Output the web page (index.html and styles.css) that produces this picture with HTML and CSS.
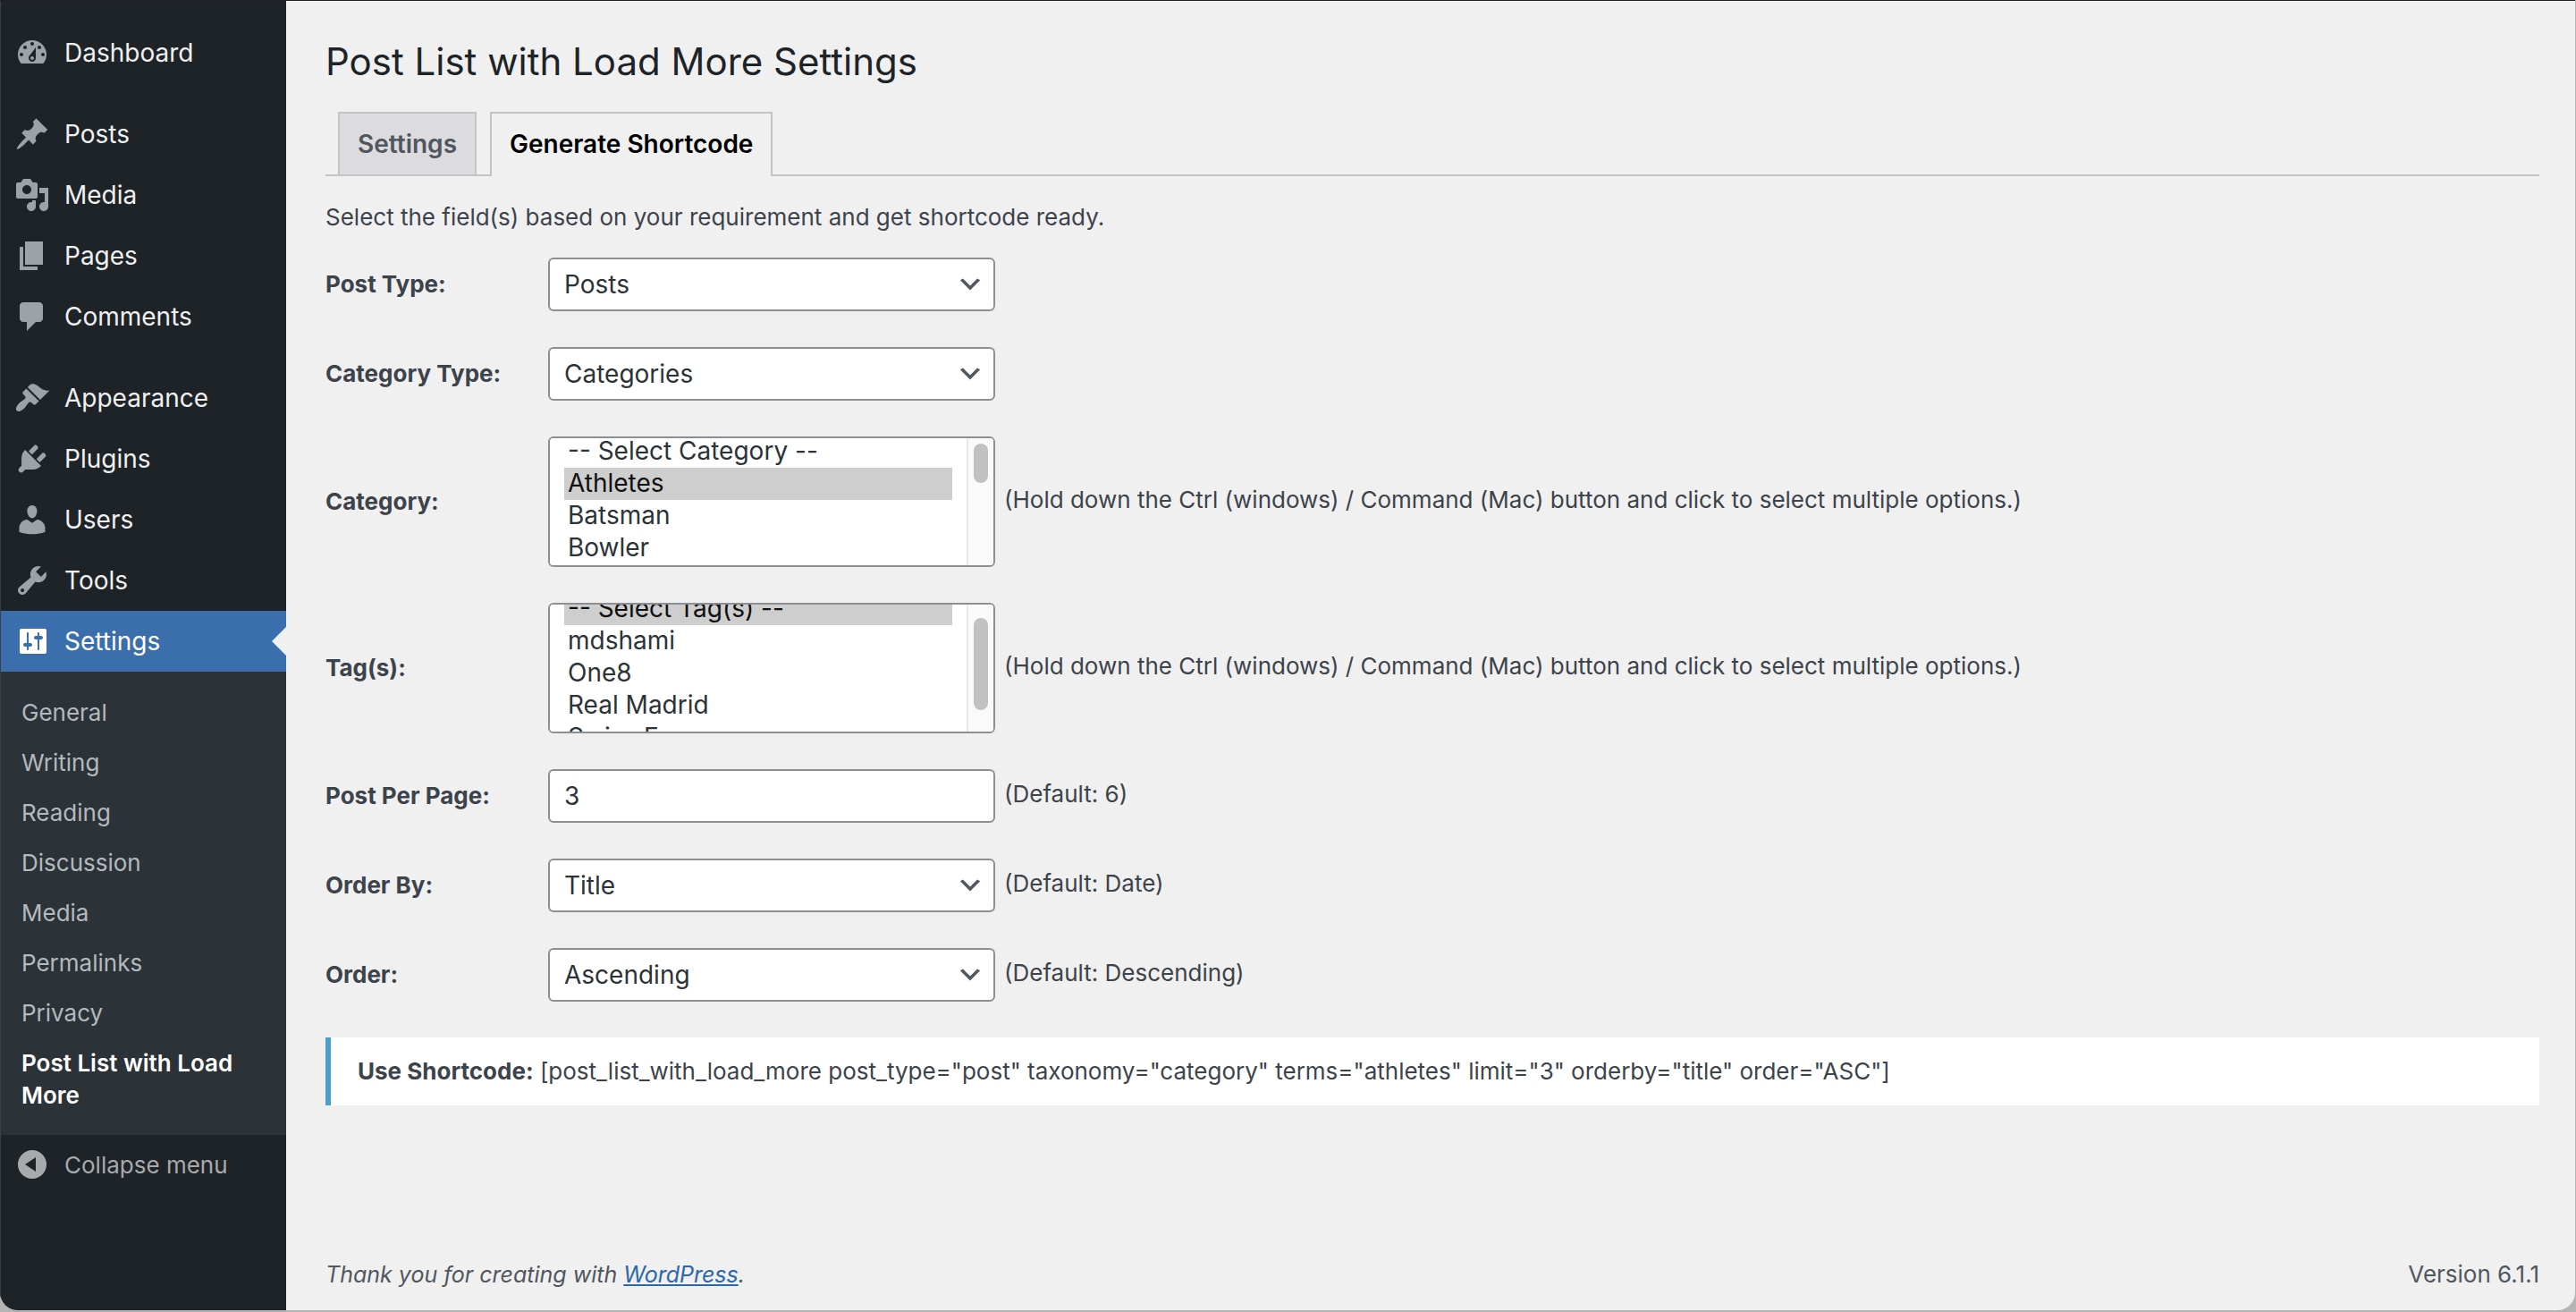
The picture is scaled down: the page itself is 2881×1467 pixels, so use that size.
FILE: index.html
```html
<!DOCTYPE html>
<html lang="en">
<head>
<meta charset="utf-8">
<title>Post List with Load More Settings</title>
<link rel="stylesheet" href="styles.css">
</head>
<body>
<div class="window">
  <nav class="sidebar" aria-label="Main menu">
    <ul class="menu">
      <li><a class="menu-item" href="#dashboard">
        <svg class="icon" viewBox="0 0 20 20"><path fill-rule="evenodd" d="M3.76 16h12.48c1.1-1.37 1.76-3.11 1.76-5 0-4.42-3.58-8-8-8s-8 3.58-8 8c0 1.89.66 3.63 1.76 5zM10 4c.55 0 1 .45 1 1s-.45 1-1 1-1-.45-1-1 .45-1 1-1zM6 6c.55 0 1 .45 1 1s-.45 1-1 1-1-.45-1-1 .45-1 1-1zm8 0c.55 0 1 .45 1 1s-.45 1-1 1-1-.45-1-1 .45-1 1-1zm-5.37 5.55L12 7v6c0 1.1-.9 2-2 2s-2-.9-2-2c0-.57.24-1.08.63-1.45zM4 10c.55 0 1 .45 1 1s-.45 1-1 1-1-.45-1-1 .45-1 1-1zm12 0c.55 0 1 .45 1 1s-.45 1-1 1-1-.45-1-1 .45-1 1-1zm-5 3c0-.55-.45-1-1-1s-1 .45-1 1 .45 1 1 1 1-.45 1-1z"/></svg>
        Dashboard</a></li>
      <li class="group-start"><a class="menu-item" href="#posts">
        <svg class="icon" viewBox="0 0 20 20"><path d="M10.44 3.02l1.82-1.82 6.36 6.35-1.83 1.82c-1.05-.68-2.48-.57-3.41.36l-.75.75c-.92.93-1.04 2.35-.35 3.41l-1.83 1.82-2.41-2.41-2.8 2.79c-.42.42-3.38 2.71-3.8 2.29s1.86-3.39 2.28-3.81l2.79-2.79L4.1 9.36l1.83-1.82c1.05.69 2.48.57 3.4-.36l.75-.75c.93-.92 1.05-2.35.36-3.41z"/></svg>
        Posts</a></li>
      <li><a class="menu-item" href="#media">
        <svg class="icon" viewBox="0 0 20 20"><path fill-rule="evenodd" d="M13 11V4c0-.55-.45-1-1-1h-1.67L9 1H5L3.67 3H2c-.55 0-1 .45-1 1v7c0 .55.45 1 1 1h10c.55 0 1-.45 1-1zM7 4.5c1.38 0 2.5 1.12 2.5 2.5S8.38 9.5 7 9.5 4.5 8.38 4.5 7 5.62 4.5 7 4.5zM14 6h5v10.5c0 1.38-1.12 2.5-2.5 2.5S14 17.88 14 16.5s1.12-2.5 2.5-2.5c.17 0 .34.02.5.05V9h-3V6zm-4 8.05V13h2v3.5c0 1.38-1.12 2.5-2.5 2.5S7 17.88 7 16.5 8.12 14 9.5 14c.17 0 .34.02.5.05z"/></svg>
        Media</a></li>
      <li><a class="menu-item" href="#pages">
        <svg class="icon" viewBox="0 0 20 20"><path d="M6 15V2h10v13H6zm-1 1h8v2H3V5h2v11z"/></svg>
        Pages</a></li>
      <li><a class="menu-item" href="#comments">
        <svg class="icon" viewBox="0 0 20 20"><path d="M5 2h9c1.1 0 2 .9 2 2v7c0 1.1-.9 2-2 2h-2l-5 5v-5H5c-1.1 0-2-.9-2-2V4c0-1.1.9-2 2-2z"/></svg>
        Comments</a></li>
      <li class="group-start"><a class="menu-item" href="#appearance">
        <svg class="icon" viewBox="0 0 20 20"><path d="M14.48 11.06L7.41 3.99l1.5-1.5c.5-.56 2.3-.47 3.51.32 1.21.8 1.43 1.28 2.91 2.1 1.18.64 2.45 1.26 4.45.85zm-.71.71L6.7 4.7 4.93 6.47c-.39.39-.39 1.02 0 1.41l1.06 1.06c.39.39.39 1.03 0 1.42-.6.6-1.43 1.11-2.21 1.69-.35.26-.7.53-1.01.84C1.43 14.23.4 16.08 1.4 17.07c.99 1 2.84-.03 4.18-1.36.31-.31.58-.66.85-1.02.57-.78 1.08-1.61 1.69-2.21.39-.39 1.02-.39 1.41 0l1.06 1.06c.39.39 1.02.39 1.41 0z"/></svg>
        Appearance</a></li>
      <li><a class="menu-item" href="#plugins">
        <svg class="icon" viewBox="0 0 20 20"><path d="M13.11 4.36L9.87 7.6 8 5.73l3.24-3.24c.35-.34 1.05-.2 1.56.32.52.51.66 1.21.31 1.55zm-8 1.77l.91-1.12 9.01 9.01-1.19.84c-.71.71-2.63 1.16-3.82 1.16H6.14L4.9 17.26c-.59.59-1.54.59-2.12 0-.59-.58-.59-1.53 0-2.12l1.24-1.24v-3.88c0-1.13.4-3.19 1.09-3.89zm7.26 3.97l3.24-3.24c.34-.35 1.04-.21 1.55.31.52.51.66 1.21.31 1.55l-3.24 3.25z"/></svg>
        Plugins</a></li>
      <li><a class="menu-item" href="#users">
        <svg class="icon" viewBox="0 0 20 20"><path d="M10 9.25c-2.27 0-2.73-3.44-2.73-3.44C7 4.02 7.82 2 9.97 2c2.16 0 2.98 2.02 2.71 3.81 0 0-.41 3.44-2.68 3.44zm0 2.57L12.72 10c2.39 0 4.52 2.33 4.52 4.53v2.49s-3.65 1.13-7.24 1.13c-3.65 0-7.24-1.13-7.24-1.13v-2.49c0-2.25 1.94-4.48 4.47-4.48z"/></svg>
        Users</a></li>
      <li><a class="menu-item" href="#tools">
        <svg class="icon" viewBox="0 0 20 20"><path fill-rule="evenodd" d="M16.68 9.77c-1.34 1.34-3.3 1.67-4.95.99l-5.41 6.52c-.99.99-2.59.99-3.58 0s-.99-2.59 0-3.57l6.52-5.42c-.68-1.65-.35-3.61.99-4.95 1.28-1.28 3.12-1.62 4.72-1.06l-2.89 2.89 2.82 2.82 2.86-2.87c.53 1.58.18 3.39-1.08 4.65zM3.81 16.21c.4.39 1.04.39 1.43 0 .4-.4.4-1.04 0-1.43-.39-.4-1.03-.4-1.43 0-.39.39-.39 1.03 0 1.43z"/></svg>
        Tools</a></li>
      <li><a class="menu-item current" href="#settings" aria-current="true">
        <svg class="icon" viewBox="0 0 20 20"><path fill-rule="evenodd" d="M18 16V4c0-.55-.45-1-1-1H4c-.55 0-1 .45-1 1v12c0 .55.45 1 1 1h13c.55 0 1-.45 1-1zM8 11h1c.55 0 1 .45 1 1s-.45 1-1 1H8v1.5c0 .28-.22.5-.5.5s-.5-.22-.5-.5V13H6c-.55 0-1-.45-1-1s.45-1 1-1h1V5.5c0-.28.22-.5.5-.5s.5.22.5.5V11zm5-2h-1c-.55 0-1-.45-1-1s.45-1 1-1h1V5.5c0-.28.22-.5.5-.5s.5.22.5.5V7h1c.55 0 1 .45 1 1s-.45 1-1 1h-1v5.5c0 .28-.22.5-.5.5s-.5-.22-.5-.5V9z"/></svg>
        Settings</a>
        <ul class="submenu">
          <li><a href="#general">General</a></li>
          <li><a href="#writing">Writing</a></li>
          <li><a href="#reading">Reading</a></li>
          <li><a href="#discussion">Discussion</a></li>
          <li><a href="#media-settings">Media</a></li>
          <li><a href="#permalinks">Permalinks</a></li>
          <li><a href="#privacy">Privacy</a></li>
          <li><a class="active" href="#load-more">Post List with Load More</a></li>
        </ul>
      </li>
    </ul>
    <button class="collapse" type="button">
      <svg class="icon" viewBox="0 0 20 20"><path fill-rule="evenodd" d="M10 2a8 8 0 1 0 0 16 8 8 0 0 0 0-16zM12 14V6l-6 4z"/></svg>
      Collapse menu</button>
  </nav>

  <main class="content">
    <h1 class="title">Post List with Load More Settings</h1>
    <div class="tabs">
      <a class="tab" href="#tab-settings">Settings</a>
      <a class="tab tab-active" href="#tab-shortcode">Generate Shortcode</a>
    </div>
    <p class="intro">Select the field(s) based on your requirement and get shortcode ready.</p>

    <form class="fields">
      <div class="row">
        <label for="post-type">Post Type:</label>
        <div class="select">
          <select id="post-type"><option>Posts</option><option>Pages</option></select>
          <svg class="chevron" viewBox="0 0 20 20"><path d="M5 6l5 5 5-5 2 1-7 7-7-7z"/></svg>
        </div>
      </div>
      <div class="row">
        <label for="category-type">Category Type:</label>
        <div class="select">
          <select id="category-type"><option>Categories</option></select>
          <svg class="chevron" viewBox="0 0 20 20"><path d="M5 6l5 5 5-5 2 1-7 7-7-7z"/></svg>
        </div>
      </div>
      <div class="row">
        <label for="category">Category:</label>
        <div class="select">
          <select class="list" id="category" multiple data-scroll="5">
            <option>-- Select Category --</option>
            <option selected>Athletes</option>
            <option>Batsman</option>
            <option>Bowler</option>
            <option>Coaches</option>
            <option>Cricket</option>
            <option>Football</option>
            <option>Hockey</option>
            <option>News</option>
            <option>Tennis</option>
            <option>Training</option>
            <option>Uncategorized</option>
          </select>
          <div class="scrollbar" aria-hidden="true"><div class="thumb"></div></div>
        </div>
        <span class="hint">(Hold down the Ctrl (windows) / Command (Mac) button and click to select multiple options.)</span>
      </div>
      <div class="row">
        <label for="tags">Tag(s):</label>
        <div class="select">
          <select class="list" id="tags" multiple data-scroll="15">
            <option selected>-- Select Tag(s) --</option>
            <option>mdshami</option>
            <option>One8</option>
            <option>Real Madrid</option>
            <option>Swiss Express</option>
          </select>
          <div class="scrollbar" aria-hidden="true"><div class="thumb"></div></div>
        </div>
        <span class="hint">(Hold down the Ctrl (windows) / Command (Mac) button and click to select multiple options.)</span>
      </div>
      <div class="row">
        <label for="per-page">Post Per Page:</label>
        <input id="per-page" type="text" inputmode="numeric" value="3">
        <span class="hint">(Default: 6)</span>
      </div>
      <div class="row">
        <label for="order-by">Order By:</label>
        <div class="select">
          <select id="order-by"><option>Title</option><option>Date</option></select>
          <svg class="chevron" viewBox="0 0 20 20"><path d="M5 6l5 5 5-5 2 1-7 7-7-7z"/></svg>
        </div>
        <span class="hint">(Default: Date)</span>
      </div>
      <div class="row">
        <label for="order">Order:</label>
        <div class="select">
          <select id="order"><option>Ascending</option><option>Descending</option></select>
          <svg class="chevron" viewBox="0 0 20 20"><path d="M5 6l5 5 5-5 2 1-7 7-7-7z"/></svg>
        </div>
        <span class="hint">(Default: Descending)</span>
      </div>
    </form>

    <p class="notice"><strong>Use Shortcode:</strong> [post_list_with_load_more post_type="post" taxonomy="category" terms="athletes" limit="3" orderby="title" order="ASC"]</p>

    <footer class="footer">
      <em>Thank you for creating with <a href="#wordpress">WordPress</a>.</em>
      <span>Version 6.1.1</span>
    </footer>
  </main>
</div>
<script src="script.js"></script>
</body>
</html>
```
FILE: styles.css
```css
* {
  box-sizing: border-box;
}

body {
  margin: 0;
  padding: 0 1px 2px 0;
  background: #b4b4b4;
  color: #3c434a;
  font: 26px/36px Inter, "Liberation Sans", sans-serif;
}

.window {
  display: flex;
  min-height: calc(100vh - 2px);
  overflow: hidden;
  border-top: 1px solid #231f24;
  border-radius: 0 0 20px 20px;
  background: #f0f0f1;
}

/* Sidebar */

.sidebar {
  flex: 0 0 320px;
  padding-top: 24px;
  border-left: 1px solid #3a3f43;
  background: #1d2327;
}

.menu,
.submenu {
  margin: 0;
  padding: 0;
  list-style: none;
}

.group-start {
  margin-top: 23px;
}

.menu-item,
.collapse {
  display: flex;
  align-items: center;
  gap: 16px;
  height: 68px;
  padding: 0 15px;
  color: #f0f0f1;
  font-size: 28px;
  text-decoration: none;
}

.icon {
  flex: none;
  width: 40px;
  height: 40px;
  fill: #9ca2a7;
}

.current {
  position: relative;
  background: #3b6ead;
  color: #fff;
}

.current .icon {
  fill: #fff;
}

.current::after {
  position: absolute;
  top: 18px;
  right: 0;
  border: 16px solid transparent;
  border-left-width: 0;
  border-right-color: #f0f0f1;
  content: "";
}

.submenu {
  padding: 18px 0 16px;
  background: #2c3338;
}

.submenu a {
  display: block;
  padding: 10px 23px;
  color: #b4b9be;
  text-decoration: none;
}

.submenu .active {
  color: #fff;
  font-weight: 600;
}

.collapse {
  width: 100%;
  height: 66px;
  border: 0;
  background: none;
  color: #a7aaad;
  font-family: inherit;
  font-size: 26px;
}

.collapse .icon {
  fill: #a7aaad;
}

/* Content */

.content {
  display: flex;
  flex: 1;
  flex-direction: column;
  padding: 38px 40px 0 44px;
}

.title {
  margin: 0 0 26px;
  color: #1d2327;
  font-size: 42px;
  font-weight: 400;
  line-height: 60px;
}

.tabs {
  display: flex;
  gap: 15px;
  padding-left: 14px;
  border-bottom: 2px solid #c3c4c7;
}

.tab {
  padding: 10px 20px;
  border: 2px solid #c3c4c7;
  border-bottom: 0;
  background: #dcdcde;
  color: #50575e;
  font-size: 28px;
  font-weight: 600;
  line-height: 48px;
  text-decoration: none;
}

.tab-active {
  margin-bottom: -2px;
  background: #f0f0f1;
  color: #000;
}

.intro {
  margin: 28px 0 27px;
}

.fields {
  display: grid;
  gap: 40px;
}

.row {
  display: grid;
  grid-template-columns: 239px 500px 1fr;
  align-items: center;
  column-gap: 10px;
}

.row label {
  font-weight: 700;
}

.hint {
  padding-bottom: 4px;
}

.select {
  display: grid;
}

select,
input {
  width: 100%;
  height: 60px;
  margin: 0;
  padding: 0 16px;
  border: 2px solid #8c8f94;
  border-radius: 6px;
  background: #fff;
  color: #2c3338;
  font: inherit;
  font-size: 28px;
  appearance: none;
}

.select select,
.chevron,
.scrollbar {
  grid-area: 1 / 1;
}

.chevron {
  place-self: center end;
  width: 32px;
  height: 32px;
  margin-right: 12px;
  fill: #50575e;
  pointer-events: none;
}

/* The list hides its native bar; .scrollbar takes its place. */

.list {
  height: 146px;
  padding: 2px 46px 2px 16px;
  overflow-y: scroll;
  scrollbar-width: none;
}

.list option {
  height: 36px;
  padding: 0 4px;
  line-height: 36px;
}

.scrollbar {
  z-index: 1;
  justify-self: end;
  width: 30px;
  margin: 2px;
  padding: 4px 6px;
  border-left: 2px solid #e8e8e8;
  border-radius: 0 4px 4px 0;
  background: #fafafa;
  pointer-events: none;
}

.thumb {
  border-radius: 8px;
  background: #c1c1c1;
}

.notice {
  margin: 40px 0 0;
  padding: 20px 30px;
  border-left: 6px solid #4a9fce;
  background: #fff;
}

.footer {
  display: flex;
  justify-content: space-between;
  margin-top: auto;
  padding-bottom: 22px;
  color: #50575e;
}

.footer em {
  font-size: 25px;
}

.footer a {
  color: #2c67a8;
}
```
FILE: script.js
```js
document.querySelectorAll("[data-scroll]").forEach((list) => {
  const bar = list.nextElementSibling;
  const thumb = bar.firstElementChild;
  const track = bar.clientHeight - 8;

  function update() {
    const scale = track / list.scrollHeight;
    thumb.style.height = Math.round(list.clientHeight * scale) + "px";
    thumb.style.marginTop = Math.round(list.scrollTop * scale) + "px";
  }

  list.scrollTop = Number(list.dataset.scroll);
  list.addEventListener("scroll", update);
  update();
});
```
